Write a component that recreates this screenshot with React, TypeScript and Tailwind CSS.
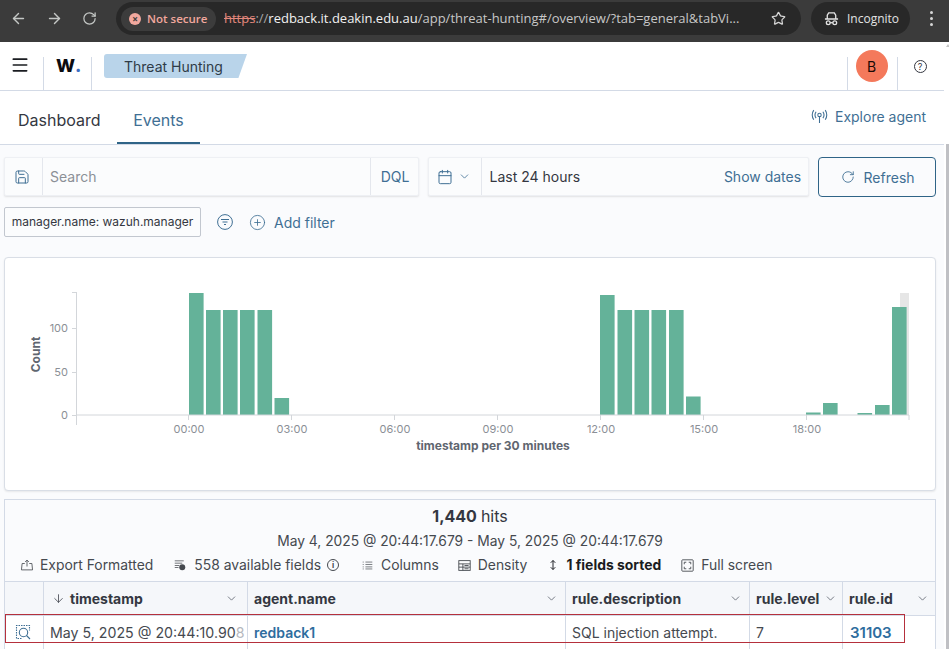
import { ArrowLeft, ArrowRight, RotateCw, Star, Menu, ChevronDown, Calendar, Save, ArrowDown, CirclePlus } from 'lucide-react';

const bars = [
  { x: 189, top: 293 },
  { x: 206, top: 310 },
  { x: 223, top: 310 },
  { x: 240, top: 310 },
  { x: 257.5, top: 310 },
  { x: 274.5, top: 398 },
  { x: 600, top: 295 },
  { x: 617.5, top: 310 },
  { x: 634.5, top: 310 },
  { x: 651.5, top: 310 },
  { x: 669, top: 310 },
  { x: 686, top: 396.5 },
  { x: 806, top: 412.5 },
  { x: 823, top: 403 },
  { x: 857.5, top: 413 },
  { x: 875, top: 405 },
  { x: 892, top: 307 },
];

const xTicks = [
  { x: 188.5, label: '00:00' },
  { x: 291.5, label: '03:00' },
  { x: 394.5, label: '06:00' },
  { x: 497.5, label: '09:00' },
  { x: 600.5, label: '12:00' },
  { x: 703.5, label: '15:00' },
  { x: 806.5, label: '18:00' },
];

function HitsChart() {
  // viewBox uses page coordinates so the numbers read off the screenshot directly
  return (
    <svg viewBox="5 258 930 232" className="block h-[232px] w-[930px]">
      <rect x="900" y="293" width="9" height="122" fill="#e6e6e6" />
      {bars.map((bar) => (
        <rect key={bar.x} x={bar.x} y={bar.top} width="14.6" height={415 - bar.top} fill="#64b299" />
      ))}
      <path d="M76.5 292V425M76.5 415H909M909 415V420M72 292.5H76.5M72 328.5H76.5M72 372.5H76.5M72 415.5H76.5" stroke="#d3d6da" fill="none" />
      {xTicks.map((tick) => (
        <path key={tick.x} d={`M${tick.x} 415V420`} stroke="#d3d6da" />
      ))}
      <g fill="#8b8f96" fontSize="11">
        <text x="68" y="332" textAnchor="end">100</text>
        <text x="68" y="376" textAnchor="end">50</text>
        <text x="68" y="419" textAnchor="end">0</text>
        {xTicks.map((tick) => (
          <text key={tick.label} x={tick.x + 0.5} y="433" textAnchor="middle">
            {tick.label}
          </text>
        ))}
      </g>
      <g fill="#5f6670" fontSize="12" fontWeight="700">
        <text x="493" y="450" textAnchor="middle">timestamp per 30 minutes</text>
        <text transform="translate(40 354.5) rotate(-90)" textAnchor="middle">Count</text>
      </g>
    </svg>
  );
}

function ColumnHead({ label, className }: { label: string; className?: string }) {
  return (
    <div className={`flex items-center justify-between border-l border-[#d3dae6] pl-[6px] pr-[5px] text-[14px] font-bold text-[#343741] ${className ?? ''}`}>
      <span>{label}</span>
      <ChevronDown className="h-[13px] w-[13px] text-[#5a606b]" strokeWidth={1.5} />
    </div>
  );
}

export default function App() {
  return (
    <div className="relative h-[649px] w-[949px] overflow-hidden bg-white font-['Inter',sans-serif] text-[#343741]">
      {/* Browser chrome */}
      <div className="flex h-[42px] items-start bg-[#3b3b3b] pt-[2px] font-['Open_Sans',sans-serif]">
        <div className="flex h-[33px] w-[116px] items-center gap-[19px] pl-[10px] text-[#c4c7c5]">
          <ArrowLeft className="h-[17px] w-[17px]" strokeWidth={2} />
          <ArrowRight className="h-[17px] w-[17px]" strokeWidth={2} />
          <RotateCw className="h-[15px] w-[15px]" strokeWidth={2} />
        </div>
        <div className="flex h-[33px] w-[685px] items-center rounded-full bg-[#282828] pl-[5px]">
          <div className="flex h-[24px] w-[95px] items-center gap-[6px] rounded-full bg-[#3c3c3c] pl-[8px] text-[11.5px] font-semibold text-[#f2a89e]">
            <span className="flex h-[12px] w-[12px] items-center justify-center rounded-full bg-[#f2a89e] text-[10px] leading-none font-bold text-[#3c3c3c]">×</span>
            Not secure
          </div>
          <div className="ml-[8px] w-[530px] text-[13px] whitespace-nowrap text-[#c7c7c7]">
            <span className="text-[#e2877c] line-through">https</span>
            <span className="text-[#a9a9a9]">://</span>
            <span className="text-[#f1f1f1]">redback.it.deakin.edu.au</span>
            <span>/app/threat-hunting#/overview/?tab=general&amp;tabVi...</span>
          </div>
          <Star className="ml-[17px] h-[15px] w-[15px] text-[#d6d6d6]" strokeWidth={2} />
        </div>
        <div className="ml-[10px] flex h-[33px] w-[99px] items-center gap-[8px] rounded-full bg-[#282828] pl-[13px] text-[12px] text-[#e3e3e3]">
          <svg viewBox="0 0 16 16" className="h-[15px] w-[15px]" fill="none" stroke="currentColor" strokeWidth="1.4">
            <path d="M1 8.5H15M3.5 8V4.5L5 2H11L12.5 4.5V8" />
            <circle cx="4.5" cy="12.5" r="2" />
            <circle cx="11.5" cy="12.5" r="2" />
            <path d="M6.5 12.5H9.5" />
          </svg>
          Incognito
        </div>
        <div className="ml-[20px] flex h-[33px] flex-col items-center justify-center gap-[3px]">
          <span className="h-[3px] w-[3px] rounded-full bg-[#d6d6d6]" />
          <span className="h-[3px] w-[3px] rounded-full bg-[#d6d6d6]" />
          <span className="h-[3px] w-[3px] rounded-full bg-[#d6d6d6]" />
        </div>
      </div>

      <div className="flex h-[607px]">
        <div className="w-[944px] shrink-0">
          {/* Top nav */}
          <div className="flex h-[49px] items-stretch border-b border-[#d3dae6] bg-white">
            <div className="flex w-[39px] items-center justify-center">
              <Menu className="h-[20px] w-[20px] -translate-y-[1px] text-[#1a1c21]" strokeWidth={2} />
            </div>
            <div className="ml-[4px] mt-[15px] flex w-[48px] border-l border-[#d3dae6]">
              <span className="ml-[12px] flex -translate-y-[8px] items-center text-[18px] leading-none font-extrabold text-[#0b0c10]">
                W<span className="text-[#3b6fc4]">.</span>
              </span>
            </div>
            <div className="mt-[15px] border-l border-[#d3dae6]" />
            <div className="ml-[12px] mt-[12px] flex h-[24px] w-[143px] items-center rounded-l-[3px] bg-[#b9d4ea] pl-[20px] text-[14px] text-[#2f3b47] [clip-path:polygon(0_0,100%_0,94%_100%,0_100%)]">
              Threat Hunting
            </div>
            <div className="flex-1" />
            <div className="mt-[15px] flex w-[50px] justify-center border-l border-[#d3dae6] pr-[2px]">
              <span className="-mt-[7px] flex h-[32px] w-[32px] items-center justify-center rounded-full bg-[#f4795b] text-[14px] text-[#1a0a05]">B</span>
            </div>
            <div className="mt-[15px] flex w-[47px] justify-center border-l border-[#d3dae6] pr-[2px]">
              <span className="mt-[3px] flex h-[13px] w-[13px] items-center justify-center rounded-full border border-[#343741] text-[9px] leading-none">?</span>
            </div>
          </div>

          {/* Tabs */}
          <div className="flex h-[54px] items-stretch justify-between border-b border-[#d3dae6] bg-white">
            <div className="flex">
              <div className="flex w-[117px] items-center pl-[18px] pt-[4px] text-[16px] text-[#343741]">Dashboard</div>
              <div className="flex w-[83px] items-center justify-center border-b-2 border-[#2f6487] pt-[6px] text-[16px] text-[#3f6f94]">Events</div>
            </div>
            <div className="flex items-center gap-[7px] pr-[18px] pb-[3px] text-[14px] text-[#3f6f94]">
              <svg viewBox="0 0 16 16" className="h-[17px] w-[17px]" fill="none" stroke="currentColor" strokeWidth="1">
                <circle cx="8" cy="6.5" r="1.6" />
                <path d="M8 8V14M4.8 3.5C3.6 5.2 3.6 7.8 4.8 9.5M11.2 3.5C12.4 5.2 12.4 7.8 11.2 9.5M2.6 2C.8 4.8.8 8.2 2.6 11M13.4 2C15.2 4.8 15.2 8.2 13.4 11" />
              </svg>
              Explore agent
            </div>
          </div>

          {/* Content */}
          <div className="h-[504px] overflow-hidden bg-[#fafbfd] px-[4px] pt-[12px]">
            <div className="flex h-[40px] w-[932px] gap-[9px]">
              <div className="flex h-[39px] w-[415px] items-stretch rounded-[2px] border border-[#eef0f4] bg-[#fbfcfd] shadow-[0_1px_2px_rgba(0,0,0,0.1)]">
                <div className="flex w-[38px] items-center justify-center border-r border-[#e4e7ed] pr-[3px] text-[#3f6f94]">
                  <Save className="h-[16px] w-[16px]" strokeWidth={1.5} />
                </div>
                <div className="flex flex-1 items-center pl-[7px] text-[14px] text-[#8b9097]">Search</div>
                <div className="flex w-[48px] items-center justify-center border-l border-[#e4e7ed] pl-[2px] text-[14px] text-[#3f6f94]">DQL</div>
              </div>
              <div className="flex h-[39px] w-[382px] items-stretch rounded-[2px] border border-[#eef0f4] bg-[#fbfcfd] shadow-[0_1px_2px_rgba(0,0,0,0.1)]">
                <div className="flex w-[53px] items-center gap-[5px] border-r border-[#e4e7ed] pl-[8px] text-[#3f6f94]">
                  <Calendar className="h-[16px] w-[16px]" strokeWidth={1.5} />
                  <ChevronDown className="h-[13px] w-[13px]" strokeWidth={1.5} />
                </div>
                <div className="flex flex-1 items-center justify-between pl-[8px] pr-[7px] text-[14px]">
                  <span className="text-[#343741]">Last 24 hours</span>
                  <span className="text-[#3f6f94]">Show dates</span>
                </div>
              </div>
              <div className="flex h-[40px] w-[118px] items-center justify-center gap-[9px] rounded-[4px] border border-[#2f6487] pl-[1px] text-[14px] text-[#3f6f94]">
                <RotateCw className="h-[14px] w-[14px]" strokeWidth={1.5} />
                Refresh
              </div>
            </div>

            <div className="mt-[10px] flex h-[30px] items-center">
              <div className="flex h-[30px] w-[197px] items-center justify-center rounded-[2px] border border-[#c2c7cf] bg-[#fbfcfd] text-[12px] text-[#343741]">
                manager.name: wazuh.manager
              </div>
              <svg viewBox="0 0 16 16" className="ml-[16px] h-[16px] w-[16px] text-[#3f6f94]" fill="none" stroke="currentColor" strokeWidth="1">
                <circle cx="8" cy="8" r="7.4" />
                <path d="M4 5.5H12M5.5 8H10.5M7 10.5H9" />
              </svg>
              <CirclePlus className="ml-[16px] h-[17px] w-[17px] text-[#3f6f94]" strokeWidth={1.2} />
              <span className="ml-[8px] text-[14px] text-[#3f6f94]">Add filter</span>
            </div>

            {/* Histogram panel */}
            <div className="mt-[20px] h-[234px] w-[932px] rounded-[4px] border border-[#d9dee6] bg-white shadow-[0_1px_2px_rgba(0,0,0,0.08)]">
              <HitsChart />
            </div>

            {/* Results panel */}
            <div className="mt-[8px] w-[932px] border border-[#d3dae6] bg-[#fafbfd]">
              <div className="flex h-[30px] items-center justify-center gap-[4px] pt-[1px] text-[16px] text-[#343741]">
                <span className="font-bold">1,440</span> hits
              </div>
              <div className="flex h-[23px] items-center justify-center text-[13.8px] text-[#45494f]">
                May 4, 2025 @ 20:44:17.679 - May 5, 2025 @ 20:44:17.679
              </div>
              <div className="flex h-[28px] items-center pb-[4px] pl-[16px] text-[13.9px] text-[#45494f]">
                <svg viewBox="0 0 16 16" className="h-[12px] w-[12px]" fill="none" stroke="currentColor" strokeWidth="1.1">
                  <path d="M5 6H1.5L.6 14.5H15.4L14.5 6H11M8 10V1.5M5.5 4L8 1.5L10.5 4" />
                </svg>
                <span className="ml-[7px]">Export Formatted</span>
                <svg viewBox="0 0 16 16" className="ml-[21px] h-[12px] w-[12px]" fill="currentColor">
                  <path d="M1 2H13V3H1ZM1 5H11V6H1ZM1 8H7V9H1ZM1 11H6V12H1Z" />
                  <circle cx="11" cy="11" r="4" />
                </svg>
                <span className="ml-[8px]">558 available fields</span>
                <span className="ml-[6px] flex h-[12px] w-[12px] items-center justify-center rounded-full border border-[#45494f] text-[8px] leading-none font-bold">i</span>
                <svg viewBox="0 0 16 16" className="ml-[23px] h-[11px] w-[11px]" fill="none" stroke="currentColor" strokeWidth="1">
                  <path d="M1 3H2.5M1 6.5H2.5M1 10H2.5M1 13H2.5M5 3H15M5 6.5H15M5 10H15M5 13H15" />
                </svg>
                <span className="ml-[8px]">Columns</span>
                <svg viewBox="0 0 16 16" className="ml-[19px] h-[13px] w-[13px]" fill="none" stroke="currentColor" strokeWidth="1.1">
                  <rect x="1" y="2" width="14" height="12" />
                  <path d="M1 6H15M1 10H15M6 6V14M8 8H13M8 12H13" />
                </svg>
                <span className="ml-[7px]">Density</span>
                <svg viewBox="0 0 16 16" className="ml-[20px] h-[12px] w-[12px] text-[#1a1c21]" fill="none" stroke="currentColor" strokeWidth="1.3">
                  <path d="M8 2V14M5 5L8 2L11 5M5 11L8 14L11 11" />
                </svg>
                <span className="ml-[7px] font-bold text-[#1a1c21]">1 fields sorted</span>
                <svg viewBox="0 0 16 16" className="ml-[20px] h-[13px] w-[13px]" fill="none" stroke="currentColor" strokeWidth="1.1">
                  <rect x="1" y="1" width="14" height="14" rx="1" />
                  <path d="M4 6.5V4H6.5M9.5 4H12V6.5M12 9.5V12H9.5M6.5 12H4V9.5" />
                </svg>
                <span className="ml-[7px]">Full screen</span>
              </div>

              {/* Data grid */}
              <div className="grid grid-cols-[38px_204px_318px_184px_93px_1fr] border-t border-[#d3dae6]">
                <div className="h-[33px] bg-[#f5f7fa]" />
                <div className="flex h-[33px] items-center justify-between border-l border-[#d3dae6] bg-[#f5f7fa] pl-[8px] pr-[9px] text-[14px] font-bold text-[#343741]">
                  <span className="flex items-center gap-[5px]">
                    <ArrowDown className="h-[13px] w-[13px]" strokeWidth={1.4} />
                    timestamp
                  </span>
                  <ChevronDown className="h-[13px] w-[13px] text-[#5a606b]" strokeWidth={1.5} />
                </div>
                <ColumnHead label="agent.name" className="bg-[#f5f7fa] pr-[7px]" />
                <ColumnHead label="rule.description" className="bg-[#f5f7fa] pr-[7px]" />
                <ColumnHead label="rule.level" className="bg-[#f5f7fa]" />
                <ColumnHead label="rule.id" className="bg-[#f5f7fa] pr-[6px]" />

                <div className="flex h-[40px] justify-center border-t border-[#d3dae6] bg-white pt-[8px] pr-[3px] text-[#3f6f94]">
                  <svg viewBox="0 0 16 16" className="h-[16px] w-[16px]" fill="none" stroke="currentColor" strokeWidth="1.1">
                    <path d="M6.5 14.5H1.5V1.5H14.5V6.5" strokeDasharray="1.5 1" />
                    <circle cx="8.5" cy="8.5" r="4.2" />
                    <path d="M11.5 11.5L15 15" />
                  </svg>
                </div>
                <div className="h-[40px] overflow-hidden border-t border-l border-[#d3dae6] bg-white pl-[6px] pt-[6px] text-[14.2px] whitespace-nowrap text-[#45494f]">
                  May 5, 2025 @ 20:44:10.90<span className="text-[#b4b7bd]">8</span>
                </div>
                <div className="h-[40px] border-t border-l border-[#d3dae6] bg-white pl-[6px] pt-[6px] text-[14px] font-semibold text-[#2f6d9e]">redback1</div>
                <div className="h-[40px] border-t border-l border-[#d3dae6] bg-white pl-[6px] pt-[6px] text-[14px] text-[#45494f]">SQL injection attempt.</div>
                <div className="h-[40px] border-t border-l border-[#d3dae6] bg-white pl-[6px] pt-[6px] text-[14px] text-[#45494f]">7</div>
                <div className="h-[40px] border-t border-l border-[#d3dae6] bg-white pl-[7px] pt-[6px] text-[15px] font-semibold text-[#2f6d9e]">31103</div>
              </div>
            </div>
          </div>
        </div>

        {/* Scrollbar */}
        <div className="relative flex w-[5px] flex-col bg-white pl-[2px]">
          <div className="h-[102px] bg-white">
            <div className="mt-[2px] h-0 w-0 border-x-[2px] border-b-[3px] border-x-transparent border-b-[#c4c4c4]" />
          </div>
          <div className="flex-1 bg-[#bfc0c4]" />
        </div>
      </div>

      {/* Red annotation box drawn on the screenshot */}
      <div className="pointer-events-none absolute left-[5px] top-[614px] h-[29px] w-[900px] border border-[#b5303c]" />
    </div>
  );
}
